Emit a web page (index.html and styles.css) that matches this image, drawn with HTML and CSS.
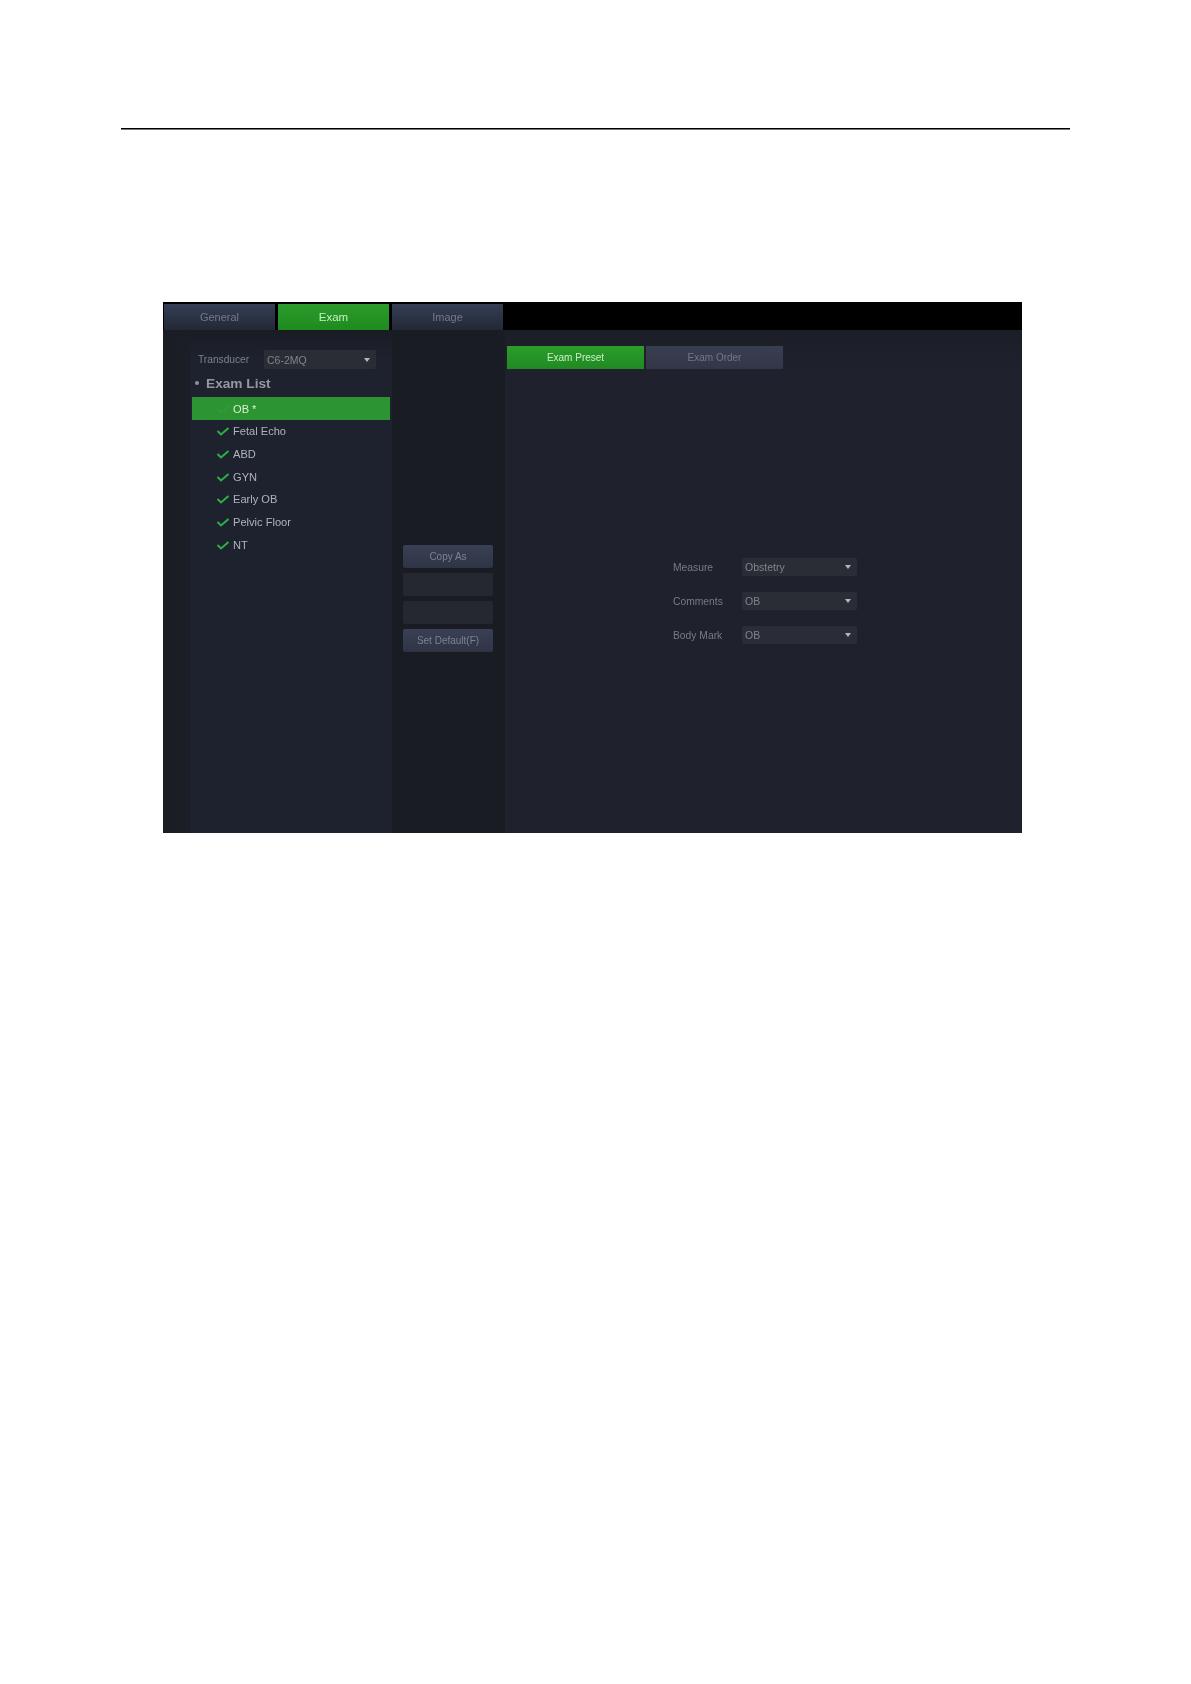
FILE: index.html
```html
<!DOCTYPE html>
<html lang="en">
<head>
<meta charset="utf-8">
<title>Exam Preset</title>
<link rel="stylesheet" href="styles.css">
</head>
<body>
<svg class="defs" width="0" height="0" aria-hidden="true"><symbol id="check" viewBox="0 0 14 12"><path d="M1.5 6 L5 9.5 L12.5 3" fill="none" stroke="#2fae46" stroke-width="2"/></symbol></svg>
<div class="page">
  <div class="rule"></div>
  <div class="app">
    <div class="tabbar">
      <div class="tab">General</div>
      <div class="tab tab-on">Exam</div>
      <div class="tab">Image</div>
    </div>
    <div class="main">
      <div class="strip"></div>
      <div class="left">
        <div class="transducer">
          <span class="lbl">Transducer</span>
          <div class="select sel-t"><span>C6-2MQ</span><i class="caret"></i></div>
        </div>
        <div class="list-head"><i class="dot"></i>Exam List</div>
        <div class="rows">
          <div class="row row-on"><svg class="chk"><use href="#check"/></svg>OB *</div>
          <div class="row"><svg class="chk"><use href="#check"/></svg>Fetal Echo</div>
          <div class="row"><svg class="chk"><use href="#check"/></svg>ABD</div>
          <div class="row"><svg class="chk"><use href="#check"/></svg>GYN</div>
          <div class="row"><svg class="chk"><use href="#check"/></svg>Early OB</div>
          <div class="row"><svg class="chk"><use href="#check"/></svg>Pelvic Floor</div>
          <div class="row"><svg class="chk"><use href="#check"/></svg>NT</div>
        </div>
      </div>
      <div class="middle">
        <div class="btn">Copy As</div>
        <div class="btn btn-off"></div>
        <div class="btn btn-off"></div>
        <div class="btn">Set Default(F)</div>
      </div>
      <div class="right">
        <div class="subtabs">
          <div class="subtab subtab-on">Exam Preset</div>
          <div class="subtab">Exam Order</div>
        </div>
        <div class="form">
          <div class="field"><span class="flabel">Measure</span><div class="select sel-f"><span>Obstetry</span><i class="caret"></i></div></div>
          <div class="field"><span class="flabel">Comments</span><div class="select sel-f"><span>OB</span><i class="caret"></i></div></div>
          <div class="field"><span class="flabel">Body Mark</span><div class="select sel-f"><span>OB</span><i class="caret"></i></div></div>
        </div>
      </div>
    </div>
  </div>
</div>
</body>
</html>
```
FILE: styles.css
```css
* { box-sizing: border-box; }
html, body { margin: 0; background: #fff; }
body { font-family: "Liberation Sans", Arial, sans-serif; }
.defs { position: absolute; }
.page { height: 1684px; padding-top: 128px; }
.rule { width: 949px; height: 2px; margin-left: 121px; background: linear-gradient(#000 50%, #777 50%); }
.app { width: 859px; height: 531px; margin: 172px 0 0 163px; background: #000; display: flex; flex-direction: column; }
.tabbar { height: 28px; padding: 2px 0 0 1px; display: flex; gap: 3px; background: #000; }
.tab { width: 111px; height: 26px; display: flex; align-items: center; justify-content: center; font-size: 11px; color: #747a85; background: linear-gradient(#353e55, #232835); filter: blur(.6px); }
.tab-on { color: #c9f0c4; font-size: 11.5px; background: linear-gradient(#2c9c2c, #1e8a1e); }
.main { flex: 1; display: flex; background: #1f222d; }
.strip { width: 27px; background: linear-gradient(90deg, #1a1d22, #1b1e27); }
.left { width: 202px; padding-top: 20px; background: linear-gradient(#1a1c24, #1e222e 30px); }
.transducer { display: flex; align-items: center; height: 19px; padding-left: 8px; }
.lbl { width: 66px; font-size: 10.2px; color: #7b808a; filter: blur(.6px); }
.select { display: flex; align-items: center; justify-content: space-between; background: #2a2d35; color: #7f848e; font-size: 10.5px; padding: 0 6px 0 3px; filter: blur(.7px); border-radius: 2px; }
.sel-t { width: 112px; height: 19px; }
.caret { width: 0; height: 0; border-left: 3px solid transparent; border-right: 3px solid transparent; border-top: 4px solid #b4b7bc; }
.list-head { height: 22px; margin-top: 3px; display: flex; align-items: center; padding-left: 5px; font-size: 13.7px; font-weight: 700; color: #94989f; filter: blur(.5px); }
.dot { width: 4px; height: 4px; margin-right: 7px; border-radius: 50%; background: #8e929a; }
.rows { margin: 3px 2px 0; }
.row { height: 22.7px; display: flex; align-items: center; padding-left: 24px; font-size: 11.1px; color: #b0b3ba; filter: blur(.45px); }
.row-on { height: 23px; background: #2c9430; color: #d8efd6; }
.chk { width: 14px; height: 12px; margin-right: 3px; }
.row-on .chk { opacity: .35; }
.middle { width: 113px; padding: 215px 0 0 11px; background: #191c22; display: flex; flex-direction: column; gap: 5px; }
.btn { width: 90px; height: 23px; display: flex; align-items: center; justify-content: center; font-size: 10px; color: #7b8292; background: linear-gradient(#3a4055, #2f3445); border-radius: 2px; filter: blur(.6px); }
.btn-off { background: #25282f; }
.right { flex: 1; padding: 16px 0 0 2px; background: linear-gradient(#1b1e26, #1f222d 40px); }
.subtabs { display: flex; gap: 2px; }
.subtab { width: 137px; height: 23px; display: flex; align-items: center; justify-content: center; font-size: 10px; color: #737885; background: linear-gradient(#3a3e52, #323648); filter: blur(.6px); }
.subtab-on { color: #c8efc4; background: linear-gradient(#2c9c2c, #1f8a22); }
.form { margin: 189px 0 0 166px; display: flex; flex-direction: column; gap: 16px; }
.field { display: flex; align-items: center; height: 18px; }
.flabel { width: 69px; font-size: 10.3px; color: #777b84; filter: blur(.7px); }
.sel-f { width: 115px; height: 18px; }
```
